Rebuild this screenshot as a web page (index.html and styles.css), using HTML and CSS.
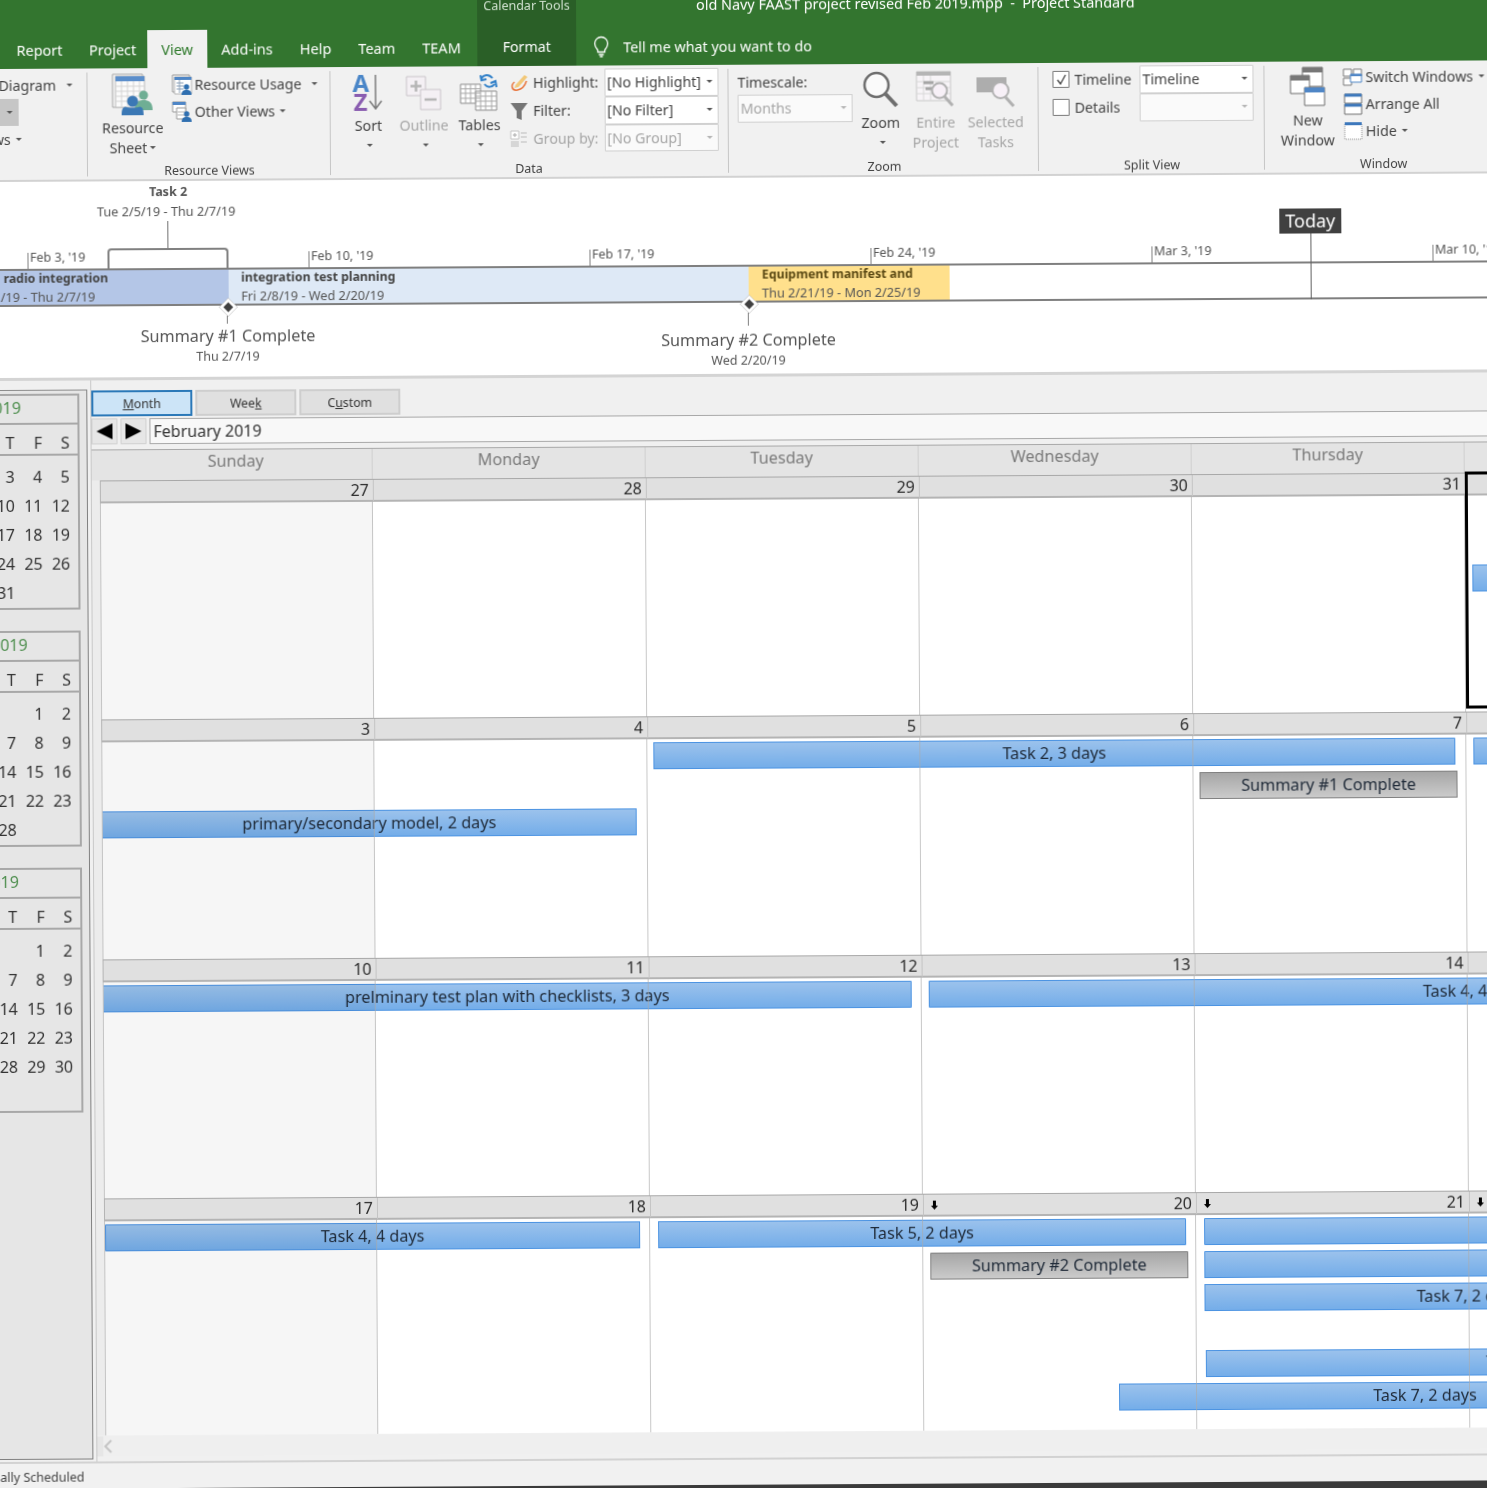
FILE: index.html
```html
<!DOCTYPE html>
<html lang="en">
<head>
  <meta charset="UTF-8">
  <title>old Navy FAAST project revised Feb 2019.mpp - Project Standard</title>
  <link rel="stylesheet" href="styles.css">
</head>
<body>
<div class="screen">

  <header class="head">
    <div class="titlebar">
      <div class="spacer"></div>
      <div class="context">Calendar Tools</div>
      <div class="doc-title">old Navy FAAST project revised Feb 2019.mpp&nbsp; - &nbsp;Project Standard</div>
    </div>
    <div class="tabs">
      <ul class="tablist">
        <li>Report</li><li>Project</li><li class="active">View</li><li>Add-ins</li><li>Help</li><li>Team</li><li>TEAM</li>
      </ul>
      <div class="context format">Format</div>
      <div class="tell">
        <svg width="18" height="22" viewBox="0 0 18 22" fill="none" stroke="#fff" stroke-width="1.3"><path d="M5.5 14.5C4 12.5 2.5 11 2.5 8a6.500 6.500 0 0 1 13 0c0 3-1.500 4.500-3 6.500v2h-7z"/><path d="M6.500 19h5M7.500 21h3"/></svg>
        <span>Tell me what you want to do</span>
      </div>
    </div>
  </header>

  <section class="ribbon">
    <div class="group g1">
      <div class="rows">
        <div class="row">Diagram<i class="caret far"></i></div>
        <div class="row selected"><i class="caret"></i></div>
        <div class="row views">Views<i class="caret"></i></div>
      </div>
    </div>

    <div class="group g2">
      <div class="group-body">
        <div class="big w78">
          <div class="big-icon tall">
            <svg width="42" height="44" viewBox="0 0 42 44">
              <rect x="1" y="1" width="30" height="33" fill="#f3f3f3" stroke="#a8a8a8"/>
              <rect x="4" y="3" width="29" height="31" fill="#fbfbfb" stroke="#bdbdbd"/>
              <rect x="4" y="3" width="29" height="5" fill="#5b8ecb"/>
              <path d="M4 13h29M4 18h29M4 23h29M4 28h29M10 8v26M16 8v26M22 8v26M28 8v26" stroke="#d3d3d3" fill="none"/>
              <circle cx="32" cy="22" r="4.500" fill="#6fae94"/>
              <path d="M23 37c0-8 4-10 9-10s9 2 9 10z" fill="#6fae94"/>
              <circle cx="21" cy="28" r="5.500" fill="#3b78b5"/>
              <path d="M10 42c0-6 1-8 4-8.500 2 1.500 12 1.500 14 0 3 .5 4 2.500 4 8.500z" fill="#3b78b5"/>
            </svg>
          </div>
          <span>Resource</span>
          <span>Sheet<i class="caret"></i></span>
        </div>
        <div class="rows">
          <div class="row">
            <svg class="ico" width="21" height="22" viewBox="0 0 21 22">
              <rect x="1" y="1" width="17" height="17" fill="#f5f5f5" stroke="#9a9a9a"/>
              <rect x="3" y="3" width="17" height="17" fill="#fff" stroke="#b5b5b5"/>
              <rect x="3" y="3" width="17" height="3" fill="#4f86c6"/>
              <path d="M5 9h7M5 12h7M5 15h7M8 6v13" stroke="#8aa0b8" fill="none"/>
              <circle cx="15" cy="13" r="2.700" fill="#2f6fb0"/><path d="M10 21c0-4 2-5 5-5s5 1 5 5z" fill="#2f6fb0"/>
            </svg>
            Resource Usage<i class="caret gap"></i>
          </div>
          <div class="row">
            <svg class="ico" width="21" height="22" viewBox="0 0 21 22">
              <rect x="1" y="1" width="13" height="10" fill="#fff" stroke="#9a9a9a"/>
              <rect x="1" y="1" width="13" height="3" fill="#4f86c6"/>
              <rect x="5" y="7" width="9" height="11" fill="#fff" stroke="#9a9a9a"/>
              <path d="M6 11h7M6 14h7" stroke="#b5b5b5"/>
              <circle cx="15" cy="13" r="2.700" fill="#2f6fb0"/><path d="M10 21c0-4 2-5 5-5s5 1 5 5z" fill="#2f6fb0"/>
            </svg>
            Other Views<i class="caret"></i>
          </div>
        </div>
      </div>
      <div class="group-label">Resource Views</div>
    </div>

    <div class="group g3">
      <div class="group-body">
        <div class="big w55">
          <div class="big-icon">
            <svg width="32" height="38" viewBox="0 0 32 38">
              <text x="0" y="18" class="az" fill="#4a86c8">A</text>
              <text x="1" y="37" class="az" fill="#8a5db0">Z</text>
              <path d="M23 1v33M17 27l6 8 6-8" stroke="#7a7a7a" stroke-width="1.500" fill="none"/>
            </svg>
          </div>
          <span>Sort</span>
          <span><i class="caret"></i></span>
        </div>
        <div class="big w55 off">
          <div class="big-icon">
            <svg width="36" height="36" viewBox="0 0 36 36" fill="#f4f0f4" stroke="#c9c4c9">
              <rect x="1" y="1" width="19" height="19"/>
              <rect x="15" y="14" width="20" height="20"/>
              <path d="M5 10.500h11M10.500 5v11M19 24h12" stroke="#b5b5b5" stroke-width="2.500" fill="none"/>
            </svg>
          </div>
          <span>Outline</span>
          <span><i class="caret"></i></span>
        </div>
        <div class="big w55">
          <div class="big-icon">
            <svg width="40" height="40" viewBox="0 0 40 40">
              <g fill="#fff" stroke="#8c8c8c">
                <rect x="1" y="13" width="20" height="19"/>
                <rect x="16" y="20" width="21" height="19"/>
              </g>
              <path d="M1 17.500h20M1 22h20M1 27h20M6 13v19M11 13v19M16 13v19M16 25h21M16 30h21M16 35h21M21 20v19M26 20v19M32 20v19" stroke="#a8a8a8" fill="none"/>
              <path d="M22 7c2-3 7-5 11 0M21 4l1 5 5-1M35 13c-2 3-7 4-10 0M37 16l-1-6-5 2" stroke="#2f7fc8" stroke-width="2" fill="none"/>
            </svg>
          </div>
          <span>Tables</span>
          <span><i class="caret"></i></span>
        </div>
        <div class="filters">
          <svg width="19" height="19" viewBox="0 0 19 19" fill="none"><path d="M5 9C1 12 2 18 8 17s8-6 9-9" stroke="#e8733a" stroke-width="1.500"/><path d="M6 12l9-10 3 2-9 10-4 1z" fill="#f2c879"/></svg>
          <span class="filter-label">Highlight:</span>
          <div class="combo">[No Highlight]<i class="caret"></i></div>
          <svg width="19" height="20" viewBox="0 0 19 20"><path d="M1 2h17l-6 8v9l-5-2v-7z" fill="#757575"/></svg>
          <span class="filter-label">Filter:</span>
          <div class="combo">[No Filter]<i class="caret"></i></div>
          <svg width="19" height="19" viewBox="0 0 19 19" fill="#d6d6d6"><rect x="1" y="2" width="8" height="8" fill="#fff" stroke="#c4c4c4"/><path d="M3 6h4M5 4v4" stroke="#aaa"/><rect x="11" y="3" width="6" height="2"/><rect x="11" y="7" width="6" height="2"/><rect x="1" y="12" width="8" height="6"/><rect x="11" y="12" width="6" height="2"/></svg>
          <span class="filter-label off">Group by:</span>
          <div class="combo off">[No Group]<i class="caret"></i></div>
        </div>
      </div>
      <div class="group-label">Data</div>
    </div>

    <div class="group g4">
      <div class="group-body">
        <div class="timescale">
          <div class="ts-label">Timescale:</div>
          <div class="combo off">Months<i class="caret"></i></div>
        </div>
        <div class="big w56">
          <div class="big-icon">
            <svg width="36" height="38" viewBox="0 0 36 38" fill="none"><circle cx="14" cy="14" r="12" fill="#fafafa" stroke="#6e6e6e" stroke-width="2.500"/><path d="M23 23l11 12" stroke="#6e6e6e" stroke-width="4"/></svg>
          </div>
          <span>Zoom</span>
          <span><i class="caret"></i></span>
        </div>
        <div class="big w54 off">
          <div class="big-icon">
            <svg width="40" height="38" viewBox="0 0 40 38" fill="none">
              <rect x="1" y="1" width="34" height="29" fill="#f7f4f7" stroke="#c8c8c8"/>
              <rect x="1" y="1" width="34" height="4" fill="#b5b5b5"/>
              <path d="M1 11h34M1 17h34M1 23h34M8 5v25M15 5v25" stroke="#d8d8d8"/>
              <path d="M8 12h10M10 18h8" stroke="#a5a5a5" stroke-width="3"/>
              <circle cx="24" cy="20" r="7.500" fill="#f7f0f7" stroke="#b0b0b0" stroke-width="2"/>
              <path d="M29 26l8 9" stroke="#b0b0b0" stroke-width="3"/>
            </svg>
          </div>
          <span>Entire</span>
          <span>Project</span>
        </div>
        <div class="big w66 off">
          <div class="big-icon">
            <svg width="40" height="38" viewBox="0 0 40 38" fill="none">
              <rect x="1" y="7" width="30" height="15" fill="#adadad"/>
              <circle cx="25" cy="20" r="8" fill="#f7f0f7" stroke="#b0b0b0" stroke-width="2"/>
              <path d="M30 27l8 9" stroke="#b0b0b0" stroke-width="3"/>
            </svg>
          </div>
          <span>Selected</span>
          <span>Tasks</span>
        </div>
      </div>
      <div class="group-label">Zoom</div>
    </div>

    <div class="group g5">
      <div class="group-body">
        <div class="split">
          <label class="check">
            <span class="box"><svg width="14" height="14" viewBox="0 0 14 14" fill="none"><path d="M3 7l3 4 5-9" stroke="#444" stroke-width="1.300"/></svg></span>Timeline
          </label>
          <div class="combo">Timeline<i class="caret"></i></div>
          <label class="check"><span class="box"></span>Details</label>
          <div class="combo off"><span></span><i class="caret"></i></div>
        </div>
      </div>
      <div class="group-label">Split View</div>
    </div>

    <div class="group g6">
      <div class="group-body">
        <div class="big w66">
          <div class="big-icon">
            <svg width="37" height="40" viewBox="0 0 37 40">
              <rect x="13" y="1" width="20" height="19" fill="#fff" stroke="#6e6e6e"/>
              <rect x="13" y="1" width="20" height="5" fill="#777"/>
              <rect x="1" y="9" width="19" height="18" fill="#fff" stroke="#6e6e6e"/>
              <rect x="1" y="9" width="19" height="5" fill="#777"/>
              <rect x="15" y="21" width="20" height="18" fill="#fff" stroke="#6e6e6e"/>
              <rect x="15" y="21" width="20" height="5" fill="#4f86c6"/>
            </svg>
          </div>
          <span>New</span>
          <span>Window</span>
        </div>
        <div class="rows">
          <div class="row">
            <svg class="ico" width="21" height="20" viewBox="0 0 21 20" fill="#fff" stroke="#7a7a7a">
              <rect x="1" y="2" width="8" height="7"/><rect x="11" y="2" width="8" height="7"/><rect x="1" y="11" width="8" height="7"/>
              <rect x="8" y="7" width="11" height="8" fill="#fff" stroke="#4f86c6"/><path d="M8 8h11" stroke="#4f86c6" stroke-width="2"/>
            </svg>
            Switch Windows<i class="caret"></i>
          </div>
          <div class="row">
            <svg class="ico" width="21" height="22" viewBox="0 0 21 22" fill="#fff" stroke="#6e6e6e">
              <rect x="2" y="1" width="17" height="9"/><rect x="2" y="11" width="17" height="10"/>
              <path d="M2 2h17M2 12h17" stroke="#3d78bc" stroke-width="3"/>
            </svg>
            Arrange All
          </div>
          <div class="row">
            <svg class="ico" width="21" height="20" viewBox="0 0 21 20" fill="#fff">
              <rect x="2" y="2" width="17" height="16" stroke="#8c8c8c" stroke-dasharray="1 1"/>
              <path d="M2 2.500h17" stroke="#3d78bc" stroke-width="3"/>
            </svg>
            Hide<i class="caret"></i>
          </div>
        </div>
      </div>
      <div class="group-label">Window</div>
    </div>
  </section>

  <section class="timeline">
    <div class="ticks">
      <div class="tick">Feb 3, '19</div>
      <div class="tick">Feb 10, '19</div>
      <div class="tick">Feb 17, '19</div>
      <div class="tick">Feb 24, '19</div>
      <div class="tick">Mar 3, '19</div>
      <div class="tick">Mar 10, '19</div>
    </div>
    <div class="band">
      <div class="seg seg-radio"><b>radio integration</b><span class="back">/19 - Thu 2/7/19</span></div>
      <div class="seg seg-plan"><b>integration test planning</b><span>Fri 2/8/19 - Wed 2/20/19</span></div>
      <div class="seg seg-equip"><b>Equipment manifest and</b><span>Thu 2/21/19 - Mon 2/25/19</span></div>
    </div>

    <div class="task-callout">
      <b>Task 2</b>
      <span>Tue 2/5/19 - Thu 2/7/19</span>
    </div>
    <div class="task-stem"></div>
    <div class="task-bracket"></div>

    <div class="today">Today</div>
    <div class="today-line"></div>

    <div class="diamond d1"></div>
    <div class="diamond-line l1"></div>
    <div class="milestone m1"><div class="ms-name">Summary #1 Complete</div><div class="ms-date">Thu 2/7/19</div></div>
    <div class="diamond d2"></div>
    <div class="diamond-line l2"></div>
    <div class="milestone m2"><div class="ms-name">Summary #2 Complete</div><div class="ms-date">Wed 2/20/19</div></div>
  </section>

  <section class="lower">
    <aside class="minis">
      <div class="mini">
        <div class="mini-title">January <em>2019</em></div>
        <div class="mini-dow"><span>S</span><span>M</span><span>T</span><span>W</span><span>T</span><span>F</span><span>S</span></div>
        <div class="mini-days">
          <span></span><span></span><span>1</span><span>2</span><span>3</span><span>4</span><span>5</span>
          <span>6</span><span>7</span><span>8</span><span>9</span><span>10</span><span>11</span><span>12</span>
          <span>13</span><span>14</span><span>15</span><span>16</span><span>17</span><span>18</span><span>19</span>
          <span>20</span><span>21</span><span>22</span><span>23</span><span>24</span><span>25</span><span>26</span>
          <span>27</span><span>28</span><span>29</span><span>30</span><span>31</span>
        </div>
      </div>
      <div class="mini">
        <div class="mini-title">February <em>2019</em></div>
        <div class="mini-dow"><span>S</span><span>M</span><span>T</span><span>W</span><span>T</span><span>F</span><span>S</span></div>
        <div class="mini-days">
          <span></span><span></span><span></span><span></span><span></span><span>1</span><span>2</span>
          <span>3</span><span>4</span><span>5</span><span>6</span><span>7</span><span>8</span><span>9</span>
          <span>10</span><span>11</span><span>12</span><span>13</span><span>14</span><span>15</span><span>16</span>
          <span>17</span><span>18</span><span>19</span><span>20</span><span>21</span><span>22</span><span>23</span>
          <span>24</span><span>25</span><span>26</span><span>27</span><span>28</span>
        </div>
      </div>
      <div class="mini">
        <div class="mini-title">March <em>2019</em></div>
        <div class="mini-dow"><span>S</span><span>M</span><span>T</span><span>W</span><span>T</span><span>F</span><span>S</span></div>
        <div class="mini-days">
          <span></span><span></span><span></span><span></span><span></span><span>1</span><span>2</span>
          <span>3</span><span>4</span><span>5</span><span>6</span><span>7</span><span>8</span><span>9</span>
          <span>10</span><span>11</span><span>12</span><span>13</span><span>14</span><span>15</span><span>16</span>
          <span>17</span><span>18</span><span>19</span><span>20</span><span>21</span><span>22</span><span>23</span>
          <span>24</span><span>25</span><span>26</span><span>27</span><span>28</span><span>29</span><span>30</span>
          <span>31</span>
        </div>
      </div>
    </aside>

    <main class="main">
      <div class="modes">
        <button class="mode on"><u>M</u>onth</button>
        <button class="mode">Wee<u>k</u></button>
        <button class="mode">C<u>u</u>stom</button>
      </div>
      <div class="month-nav">
        <button class="nav-btn"><svg width="18" height="18" viewBox="0 0 18 18"><path d="M17 1v16L1 9z"/></svg></button>
        <button class="nav-btn"><svg width="18" height="18" viewBox="0 0 18 18"><path d="M1 1v16l16-8z"/></svg></button>
        <div class="month-title">February 2019</div>
      </div>

      <div class="calendar">
        <div class="dow"><span>Sunday</span><span>Monday</span><span>Tuesday</span><span>Wednesday</span><span>Thursday</span><span>Friday</span><span>Saturday</span></div>

        <div class="week">
          <div class="week-head"><div>27</div><div>28</div><div>29</div><div>30</div><div>31</div><div>1</div><div>2</div></div>
          <div class="week-body">
            <div class="bar s2" style="left:1372px;width:500px"></div>
            <div class="cells"><i></i><i></i><i></i><i></i><i></i><i></i><i></i></div>
          </div>
          <div class="today-cell"></div>
        </div>

        <div class="week">
          <div class="week-head"><div>3</div><div>4</div><div>5</div><div>6</div><div>7</div><div>8</div><div>9</div></div>
          <div class="week-body">
            <div class="bar s0" style="left:552px;width:802px">Task 2, 3 days</div>
            <div class="bar s0" style="left:1372px;width:500px"></div>
            <div class="bar grey s1" style="left:1098px;width:258px">Summary #1 Complete</div>
            <div class="bar s2" style="left:0;width:535px">primary/secondary model, 2 days</div>
            <div class="cells"><i></i><i></i><i></i><i></i><i></i><i></i><i></i></div>
          </div>
        </div>

        <div class="week">
          <div class="week-head"><div>10</div><div>11</div><div>12</div><div>13</div><div>14</div><div>15</div><div>16</div></div>
          <div class="week-body">
            <div class="bar s0" style="left:0;width:809px">prelminary test plan with checklists, 3 days</div>
            <div class="bar s0" style="left:826px;width:1092px">Task 4, 4 days</div>
            <div class="cells"><i></i><i></i><i></i><i></i><i></i><i></i><i></i></div>
          </div>
        </div>

        <div class="week">
          <div class="week-head">
            <div>17</div><div>18</div><div>19</div>
            <div class="more"><svg width="7" height="9" viewBox="0 0 7 9"><path d="M2 0h3v5h2L3.500 9 0 5h2z"/></svg>20</div>
            <div class="more"><svg width="7" height="9" viewBox="0 0 7 9"><path d="M2 0h3v5h2L3.500 9 0 5h2z"/></svg>21</div>
            <div class="more"><svg width="7" height="9" viewBox="0 0 7 9"><path d="M2 0h3v5h2L3.500 9 0 5h2z"/></svg>22</div>
            <div>23</div>
          </div>
          <div class="week-body">
            <div class="bar s0" style="left:1px;width:535px">Task 4, 4 days</div>
            <div class="bar s0" style="left:554px;width:528px">Task 5, 2 days</div>
            <div class="bar grey s1" style="left:826px;width:258px">Summary #2 Complete</div>
            <div class="bar s0" style="left:1100px;width:800px"></div>
            <div class="bar s1" style="left:1100px;width:800px"></div>
            <div class="bar s2" style="left:1100px;width:528px">Task 7, 2 days</div>
            <div class="bar s4" style="left:1101px;width:664px">Task 8, 2 days</div>
            <div class="bar s5" style="left:1014px;width:612px">Task 7, 2 days</div>
            <div class="cells"><i></i><i></i><i></i><i></i><i></i><i></i><i></i></div>
          </div>
        </div>
      </div>

      <div class="hscroll"><svg width="10" height="14" viewBox="0 0 10 14" fill="none"><path d="M8 1L2 7l6 6" stroke="#c4c4c4" stroke-width="2"/></svg></div>
    </main>
  </section>

  <footer class="status">
    <span>Manually Scheduled</span>
  </footer>
  <div class="taskbar"></div>
</div>
</body>
</html>
```
FILE: styles.css
```css
html, body {
  margin: 0;
  height: 100%;
  overflow: hidden;
  background: #3a3a3a;
}
body {
  font-family: "Noto Sans", "Open Sans", sans-serif;
  font-size: 14.5px;
  color: #444;
}
ul {
  list-style: none;
  margin: 0;
  padding: 0;
}
button {
  font-family: inherit;
}

/* the whole window was photographed a little crooked */
.screen {
  width: 1540px;
  height: 1530px;
  margin-left: -20px;
  display: flex;
  flex-direction: column;
  background: #f0f0f0;
  overflow: hidden;
  transform-origin: 20px 0;
  transform: rotate(-0.33deg);
  filter: blur(0.3px);
}

/* header */
.head {
  background: #33752f;
  color: #fff;
  flex: none;
}
.titlebar {
  display: flex;
  height: 31px;
}
.titlebar .spacer {
  width: 497px;
}
.context {
  width: 99px;
  background: #2a5f27;
  text-align: center;
  font-size: 12.500px;
  line-height: 17px;
  color: #cfe0ce;
}
.doc-title {
  margin-left: 120px;
  line-height: 17px;
  font-size: 14.400px;
  white-space: nowrap;
}
.tabs {
  display: flex;
  height: 38px;
}
.tablist {
  width: 497px;
  display: flex;
  padding-left: 23px;
  box-sizing: border-box;
}
.tablist li {
  padding: 0 13.200px;
  line-height: 38px;
}
.tablist li.active {
  background: #f1f1f1;
  color: #2f7a2c;
  margin: 0 -1px 0 -2px;
  padding: 0 13.800px;
}
.tablist li.active + li {
  margin-left: 2px;
}
.tablist li.active ~ li {
  padding: 0 13.500px;
}
.context.format {
  color: #fff;
  font-size: 14.200px;
  line-height: 38px;
}
.tell {
  display: flex;
  align-items: center;
  gap: 13px;
  padding-left: 16px;
  font-size: 14.300px;
}

/* ribbon */
.ribbon {
  flex: none;
  display: flex;
  height: 113px;
  background: #f1f1f1;
  border-bottom: 2px solid #d2d2d2;
  box-sizing: border-box;
  font-size: 14.200px;
}
.group {
  position: relative;
  display: flex;
  flex-direction: column;
  box-sizing: border-box;
  padding-top: 3px;
  flex: none;
}
.group::after {
  content: "";
  position: absolute;
  right: 0;
  top: 4px;
  bottom: 3px;
  width: 1px;
  background: #c6c6c6;
}
.g1 { width: 107px; padding-left: 18px; }
.g2 { width: 243px; padding-left: 6px; }
.g3 { width: 398px; padding-left: 10px; }
.g4 { width: 310px; padding-left: 9px; }
.g5 { width: 226px; padding-left: 14px; }
.g6 { width: 260px; padding-left: 10px; }
.g6::after { display: none; }

.group-body {
  display: flex;
  flex: 1;
}
.group-label {
  text-align: center;
  font-size: 12.500px;
  line-height: 18px;
  margin-bottom: -1px;
}
.g2 .group-label { margin-right: 6px; }
.g3 .group-label { padding-right: 12px; }
.g4 .group-label { padding-right: 8px; }
.g5 .group-label { padding-right: 14px; }
.g6 .group-label { text-align: left; padding-left: 85px; }

.rows {
  display: flex;
  flex-direction: column;
}
.row {
  display: flex;
  align-items: center;
  height: 27px;
  white-space: nowrap;
}
.g1 .row.selected {
  width: 38px;
  margin-left: -18px;
  background: #c6c6c6;
  justify-content: flex-end;
  padding-right: 6px;
  box-sizing: border-box;
}
.g1 .row.views {
  margin-left: -26px;
}
.ico {
  flex: none;
  margin-right: 2px;
}
.caret {
  display: inline-block;
  flex: none;
  width: 0;
  height: 0;
  margin-left: 5px;
  border-left: 3px solid transparent;
  border-right: 3px solid transparent;
  border-top: 3.500px solid #555;
}
.caret.far { margin-left: 10px; }
.caret.gap { margin-left: 10px; }

.big {
  display: flex;
  flex-direction: column;
  align-items: center;
  flex: none;
  white-space: nowrap;
}
.big > span {
  display: flex;
  align-items: center;
  height: 20px;
}
.big.off, .off {
  color: #a6a6a6;
}
.big .caret { margin-left: 3px; }
.big-icon {
  height: 42px;
  padding-bottom: 3px;
  display: flex;
  align-items: flex-end;
}
.big-icon.tall {
  height: 46px;
  padding-bottom: 0;
}
.w54 { width: 54px; }
.w55 { width: 55.500px; }
.w56 { width: 56px; }
.w66 { width: 66px; }
.w78 { width: 78px; }
.az {
  font-size: 24px;
  font-weight: 700;
  font-family: "Noto Sans", sans-serif;
}

.filters {
  margin-left: 2px;
  display: grid;
  grid-template-columns: 20px 75px 114px;
  grid-auto-rows: 27.800px;
  align-items: center;
}
.filter-label {
  padding-left: 4px;
}
.combo {
  height: 27.800px;
  box-sizing: border-box;
  background: #fff;
  border: 1px solid #d0d0d0;
  padding: 0 5px 0 2px;
  display: flex;
  align-items: center;
  justify-content: space-between;
  white-space: nowrap;
}
.combo.off { background: #fafafa; }
.combo.off .caret { border-top-color: #b5b5b5; }
.timescale {
  width: 115px;
}
.ts-label {
  height: 27px;
  line-height: 29px;
}
.split {
  display: grid;
  grid-template-columns: 87px 114px;
  grid-auto-rows: 27.800px;
  align-items: center;
}
.check {
  display: flex;
  align-items: center;
  gap: 5px;
}
.box {
  width: 15px;
  height: 15px;
  border: 1px solid #7a7a7a;
  background: #fff;
  display: flex;
  align-items: center;
  justify-content: center;
}
.g6 .rows {
  margin-left: 2px;
  margin-top: -1px;
}

/* timeline */
.timeline {
  flex: none;
  position: relative;
  height: 199px;
  background: #fff;
  border-bottom: 3px solid #d4d4d4;
  box-sizing: border-box;
  padding-top: 71px;
  font-size: 12.500px;
  color: #555;
}
.ticks {
  display: flex;
  margin-left: 45.500px;
  height: 16px;
}
.tick {
  width: 281px;
  flex: none;
  box-sizing: border-box;
  border-left: 1px solid #808080;
  padding-left: 2px;
  line-height: 10px;
  white-space: nowrap;
}
.band {
  display: flex;
  height: 38px;
  box-sizing: border-box;
  border-top: 2px solid #7f7f7f;
  border-bottom: 2px solid #7f7f7f;
}
.seg {
  display: flex;
  flex-direction: column;
  justify-content: center;
  box-sizing: border-box;
  line-height: 18px;
  white-space: nowrap;
  flex: none;
  font-size: 12.700px;
}
.seg b {
  color: #444;
  font-size: 12.300px;
}
.seg-radio {
  width: 246.500px;
  background: #b4c6e7;
  padding-left: 22px;
}
.seg-radio .back {
  margin-left: -3px;
}
.seg-plan {
  width: 520.800px;
  background: #dee9f6;
  padding-left: 13px;
}
.seg-equip {
  width: 200.700px;
  background: #ffe08c;
  padding-left: 13px;
}
.seg-equip b {
  color: #5c4a14;
}
.task-callout {
  position: absolute;
  left: 65px;
  top: 2px;
  width: 240px;
  text-align: center;
  line-height: 18.500px;
  display: flex;
  flex-direction: column;
  font-size: 12.700px;
}
.task-callout b {
  font-size: 12.500px;
  margin-left: 4px;
}
.task-stem {
  position: absolute;
  left: 186px;
  top: 40px;
  width: 1px;
  height: 28px;
  background: #707070;
}
.task-bracket {
  position: absolute;
  left: 125.500px;
  top: 67px;
  width: 121px;
  height: 20px;
  box-sizing: border-box;
  border: 2px solid #808080;
  border-bottom: 0;
  border-radius: 4px 4px 0 0;
}
.today {
  position: absolute;
  left: 1298px;
  top: 34px;
  width: 62px;
  height: 25px;
  background: #404040;
  color: #fff;
  font-size: 18px;
  line-height: 25px;
  text-align: center;
}
.today-line {
  position: absolute;
  left: 1329px;
  top: 59px;
  width: 1px;
  height: 66px;
  background: #606060;
}
.diamond {
  position: absolute;
  top: 120px;
  width: 7px;
  height: 7px;
  background: #404040;
  border: 3px solid #fff;
  transform: rotate(45deg);
}
.d1 { left: 240px; }
.d2 { left: 761px; }
.diamond-line {
  position: absolute;
  width: 1px;
  background: #808080;
}
.l1 { left: 245px; top: 135px; height: 8px; }
.l2 { left: 766px; top: 135px; height: 13px; }
.milestone {
  position: absolute;
  width: 260px;
  text-align: center;
}
.m1 { left: 116px; top: 143px; }
.m2 { left: 636.500px; top: 150px; }
.ms-name {
  font-size: 16.200px;
  line-height: 24px;
}
.ms-date {
  font-size: 12.500px;
  line-height: 18px;
}

/* mini calendars and month view */
.lower {
  flex: none;
  display: flex;
  height: 1081px;
}
.minis {
  flex: none;
  width: 105px;
  box-sizing: border-box;
  margin-top: 9px;
  padding: 3px 7px 0 0;
  height: 1070px;
  display: flex;
  flex-direction: column;
  align-items: flex-end;
  gap: 21px;
  background: #e6e6e6;
  border-top: 1px solid #8c8c8c;
  border-right: 1px solid #808080;
  border-bottom: 1px solid #808080;
  overflow: hidden;
  color: #333;
  font-size: 16px;
}
.mini {
  flex: none;
  width: 196.500px;
  box-sizing: border-box;
  border: 2px solid #a8a8a8;
}
.mini-title {
  height: 27px;
  line-height: 24px;
  text-align: center;
  padding-right: 18px;
  box-sizing: border-box;
  color: #666;
  font-size: 16px;
}
.mini-title em {
  font-style: normal;
  color: #4f8f4f;
}
.mini-dow {
  display: grid;
  grid-template-columns: repeat(7, 27.500px);
  height: 33px;
  line-height: 32px;
  padding-top: 1.500px;
  border-top: 2px solid #a8a8a8;
  border-bottom: 2px solid #a8a8a8;
  box-sizing: border-box;
}
.mini-days {
  display: grid;
  grid-template-columns: repeat(7, 27.500px);
  grid-auto-rows: 29px;
  line-height: 29px;
  padding-top: 7px;
}
.mini-dow span, .mini-days span {
  text-align: right;
  padding-right: 8px;
}
.main {
  flex: none;
  width: 1450px;
  margin-left: 3px;
  display: flex;
  flex-direction: column;
  border-left: 1px solid #c8c8c8;
  box-sizing: border-box;
}
.modes {
  display: flex;
  gap: 3px;
  padding-top: 10px;
  flex: none;
}
.mode {
  width: 101px;
  height: 26px;
  padding: 0;
  font-size: 12.300px;
  color: #333;
  background: #e0e0e0;
  border: 2px solid #cecece;
}
.mode.on {
  background: #cce4f7;
  border-color: #2a78b8;
}
.month-nav {
  display: flex;
  gap: 2px;
  margin-top: 2px;
  height: 26px;
  flex: none;
}
.nav-btn {
  width: 26px;
  height: 26px;
  padding: 0;
  margin-right: 1px;
  background: #e6e6e6;
  border: 1px solid #d0d0d0;
  display: flex;
  align-items: center;
  justify-content: center;
}
.month-title {
  flex: 1;
  background: #f8f8f8;
  border: 1px solid #a8a8a8;
  border-right: 0;
  font-size: 16px;
  color: #333;
  line-height: 25px;
  padding-left: 3px;
  box-sizing: border-box;
}
.calendar {
  flex: none;
  height: 986px;
  margin-top: 5px;
  overflow: hidden;
  background: #ececec;
  border-top: 1px solid #a8a8a8;
  box-sizing: border-box;
}
.dow {
  display: grid;
  grid-template-columns: repeat(7, 273px);
  height: 30px;
  padding-left: 8px;
  line-height: 22px;
  font-size: 16.200px;
  color: #7a7a7a;
  background: #e4e4e4;
}
.dow span {
  text-align: center;
  border-right: 1px solid #cfcfcf;
  box-sizing: border-box;
}
.week {
  position: relative;
  margin-left: 8px;
  height: 239.300px;
}
.week-head {
  display: grid;
  grid-template-columns: repeat(7, 273px);
  height: 23px;
  box-sizing: border-box;
  background: #e0e0e0;
  border-top: 1px solid #a8a8a8;
  border-bottom: 2px solid #b4b4b4;
  border-left: 1px solid #b4b4b4;
  font-size: 16px;
  line-height: 21px;
  color: #2b2b2b;
}
.week-head > div {
  text-align: right;
  padding-right: 4px;
  border-right: 1px solid #c4c4c4;
  box-sizing: border-box;
}
.week-head > .more {
  display: flex;
  justify-content: space-between;
  align-items: center;
  padding-left: 7px;
}
.week-body {
  position: relative;
  height: 216.300px;
  background: #fff;
  overflow: hidden;
}
.cells {
  position: absolute;
  inset: 0;
  z-index: 1;
  display: grid;
  grid-template-columns: repeat(7, 273px);
}
.cells i {
  box-sizing: border-box;
  border-right: 1px solid rgba(170, 170, 170, 0.65);
}
.cells i:first-child {
  background: rgba(0, 0, 0, 0.035);
  border-left: 1px solid #c4c4c4;
}
.bar {
  position: absolute;
  height: 27px;
  box-sizing: border-box;
  background: linear-gradient(#9bc2ec, #74ade9);
  border: 1px solid #4b93e2;
  color: #1f2a38;
  font-size: 16.200px;
  line-height: 25px;
  text-align: center;
  white-space: nowrap;
}
.bar.grey {
  background: linear-gradient(#a6a6a6, #cbcbcb);
  border-color: #808080;
}
.s0 { top: 3px; }
.s1 { top: 36px; }
.s2 { top: 69px; }
.s4 { top: 135px; }
.s5 { top: 168px; }
.today-cell {
  position: absolute;
  z-index: 2;
  left: 1365px;
  top: -1px;
  width: 300px;
  height: 237px;
  box-sizing: border-box;
  border: 3px solid #000;
}
.hscroll {
  flex: none;
  height: 20px;
  background: #efefef;
  display: flex;
  align-items: center;
  border-left: 6px solid #e6e6e6;
  margin-top: 1px;
}

/* status bar */
.status {
  flex: none;
  height: 27px;
  background: #f1f1f1;
  border-top: 2px solid #d2d2d2;
  box-sizing: border-box;
  font-size: 12.500px;
  line-height: 28px;
  color: #444;
  white-space: nowrap;
  overflow: hidden;
}
.status span {
  margin-left: -22px;
}
.taskbar {
  flex: 1;
  background: #3a3a3a;
}
```
